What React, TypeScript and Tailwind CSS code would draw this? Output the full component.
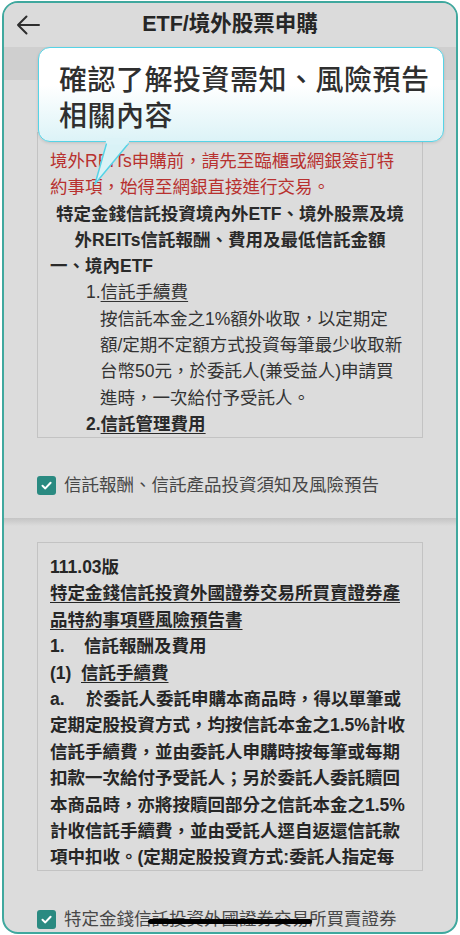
import React from "react";

const Check = () => (
  <div className="w-[19px] h-[19px] rounded-[3px] bg-[#2a8a81] flex items-center justify-center shrink-0">
    <svg width="13" height="13" viewBox="0 0 13 13" fill="none">
      <path d="M2.5 6.8 L5.3 9.4 L10.6 3.8" stroke="#ffffff" strokeWidth="2" strokeLinecap="round" strokeLinejoin="round" />
    </svg>
  </div>
);

export default function App() {
  return (
    <div className="w-[460px] h-[935px] bg-white pt-[1px] pl-[2px] font-['Liberation_Sans','Noto_Sans_CJK_TC',sans-serif]">
      <div className="relative w-[456px] h-[933px] rounded-[16px] border-2 border-[#3fa89e] overflow-hidden bg-[#dcdcdc] flex flex-col">
        {/* header */}
        <div className="h-[44px] shrink-0 grid grid-cols-[48px_1fr_48px] items-center bg-[#dbdbdb]">
          <div className="pl-[12px] flex items-center">
            <svg width="24" height="24" viewBox="0 0 24 24" fill="none">
              <path d="M2 12 H23 M2 12 L10.5 3.5 M2 12 L10.5 20.5" stroke="#2e2e2e" strokeWidth="2" strokeLinecap="round" strokeLinejoin="round" />
            </svg>
          </div>
          <div className="text-center text-[21.5px] font-bold text-[#262626] leading-none">ETF/境外股票申購</div>
          <div />
        </div>
        {/* band */}
        <div className="h-[33px] shrink-0 bg-[#cfcfcf]" />

        {/* section 1 */}
        <div className="shrink-0 h-[438px] flex flex-col px-[33px]">
          <div className="mt-[52px] h-[306px] border border-[#c3c3c3] overflow-hidden pt-[15px] pl-[12px] pr-[8px] text-[17.5px] leading-[26.3px] text-[#333333] whitespace-nowrap">
            <div className="text-[#b8312f]">境外REITs申購前，請先至臨櫃或網銀簽訂特</div>
            <div className="text-[#b8312f]">約事項，始得至網銀直接進行交易。</div>
            <div className="font-bold text-center text-[#2a2a2a] -ml-[12px] -mr-[8px]">特定金錢信託投資境內外ETF、境外股票及境</div>
            <div className="font-bold text-center text-[#2a2a2a] -ml-[12px] -mr-[8px]">外REITs信託報酬、費用及最低信託金額</div>
            <div className="font-bold text-[#2a2a2a]">一、境內ETF</div>
            <div className="pl-[36px]">1.<span className="underline underline-offset-[3px]">信託手續費</span></div>
            <div className="pl-[50px]">按信託本金之1%額外收取，以定期定</div>
            <div className="pl-[50px]">額/定期不定額方式投資每筆最少收取新</div>
            <div className="pl-[50px]">台幣50元，於委託人(兼受益人)申請買</div>
            <div className="pl-[50px]">進時，一次給付予受託人。</div>
            <div className="pl-[36px] font-bold text-[#2a2a2a]">2.<span className="underline underline-offset-[3px]">信託管理費用</span></div>
          </div>
          <div className="mt-[38px] flex items-center gap-[8px]">
            <Check />
            <span className="text-[17.5px] leading-[19px] text-[#474747] whitespace-nowrap">信託報酬、信託產品投資須知及風險預告</span>
          </div>
        </div>

        {/* separator */}
        <div className="h-[8px] shrink-0 bg-gradient-to-b from-[#c4c4c4] to-[#dcdcdc]" />

        {/* section 2 */}
        <div className="shrink-0 flex flex-col px-[33px]">
          <div className="mt-[16px] h-[329px] border border-[#c3c3c3] overflow-hidden pt-[11px] pl-[12px] pr-[6px] text-[17.5px] leading-[26.4px] text-[#262626] font-semibold whitespace-nowrap">
            <div className="font-bold">111.03版</div>
            <div className="font-bold underline underline-offset-[3px]">特定金錢信託投資外國證券交易所買賣證券產</div>
            <div className="font-bold underline underline-offset-[3px]">品特約事項暨風險預告書</div>
            <div><span className="inline-block w-[34px]">1.</span>信託報酬及費用</div>
            <div><span className="inline-block w-[31px]">(1)</span><span className="underline underline-offset-[3px]">信託手續費</span></div>
            <div><span className="inline-block w-[36px]">a.</span>於委託人委託申購本商品時，得以單筆或</div>
            <div>定期定股投資方式，均按信託本金之1.5%計收</div>
            <div>信託手續費，並由委託人申購時按每筆或每期</div>
            <div>扣款一次給付予受託人；另於委託人委託贖回</div>
            <div>本商品時，亦將按贖回部分之信託本金之1.5%</div>
            <div>計收信託手續費，並由受託人逕自返還信託款</div>
            <div>項中扣收。(定期定股投資方式:委託人指定每</div>
          </div>
          <div className="mt-[39px] flex items-center gap-[8px]">
            <Check />
            <span className="text-[17.5px] leading-[19px] text-[#474747] whitespace-nowrap">特定金錢信託投資外國證券交易所買賣證券</span>
          </div>
        </div>

        {/* callout bubble */}
        <div className="absolute left-[34px] top-[44px] w-[406px] h-[95px] rounded-[12px] border-[1.5px] border-[#56d3e6] bg-gradient-to-b from-[#ffffff] from-40% to-[#dcf3f7] pt-[15px] pl-[20px] shadow-[0_1px_3px_rgba(0,0,0,0.12)]">
          <div className="text-[28px] leading-[36px] font-medium text-[#2f2f2f] whitespace-nowrap tracking-[0.5px]">
            確認了解投資需知、風險預告
            <br />
            相關內容
          </div>
        </div>
        <svg className="absolute left-[86px] top-[135px]" width="42" height="52" viewBox="0 0 42 52" fill="none">
          <polygon points="15,0 39,0 39,4 5,46 16,4" fill="#dcf3f7" />
          <path d="M16.5 5.5 L5 46 L38.5 5.5" stroke="#56d3e6" strokeWidth="1.5" strokeLinejoin="round" fill="#d9f2f6" />
          <rect x="17.5" y="0" width="20" height="6.5" fill="#dcf3f7" />
        </svg>

        {/* home indicator */}
        <div className="absolute left-[144px] top-[916px] w-[164px] h-[5px] rounded-full bg-black" />
      </div>
    </div>
  );
}
